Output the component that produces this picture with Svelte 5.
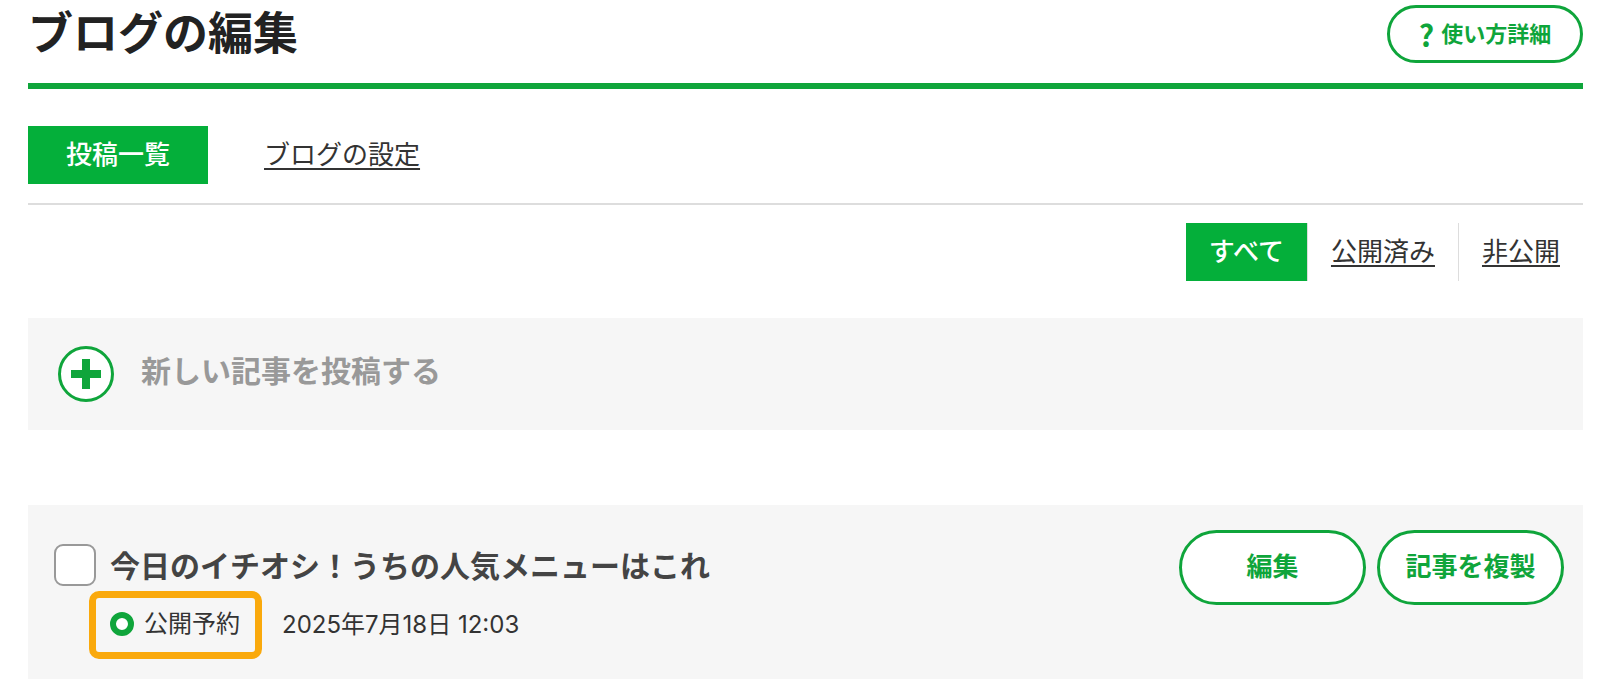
<script>
  let selected = $state(false);
  const posts = [
    { id: 'post-1', title: '今日のイチオシ！うちの人気メニューはこれ', status: '公開予約', date: '2025年7月18日 12:03' }
  ];
</script>

<main>
  <header>
    <h1>ブログの編集</h1>
    <button class="pill help" type="button"><span class="mark">?</span>使い方詳細</button>
  </header>

  <nav class="tabs" aria-label="ブログ">
    <a class="tab current" href="#list">投稿一覧</a>
    <a class="tab" href="#settings">ブログの設定</a>
  </nav>

  <nav class="filters" aria-label="公開状態">
    <a class="filter current" href="#all">すべて</a>
    <a class="filter" href="#published">公開済み</a>
    <a class="filter" href="#private">非公開</a>
  </nav>

  <button class="new-post" type="button">
    <svg viewBox="0 0 56 56" aria-hidden="true">
      <circle cx="28" cy="28" r="26.5" fill="#fff" stroke="#0fa53b" stroke-width="3" />
      <path d="M13 28H43M28 13V43" stroke="#0fa53b" stroke-width="8" />
    </svg>
    <span>新しい記事を投稿する</span>
  </button>

  {#each posts as post (post.id)}
    <article>
      <input id={post.id} type="checkbox" bind:checked={selected} />
      <div class="body">
        <label for={post.id}>{post.title}</label>
        <div class="meta">
          <span class="status">
            <svg viewBox="0 0 24 24" aria-hidden="true">
              <circle cx="12" cy="12" r="9" fill="#fff" stroke="#0fa53b" stroke-width="6" />
            </svg>
            {post.status}
          </span>
          <time datetime="2025-07-18T12:03">{post.date}</time>
        </div>
      </div>
      <div class="actions">
        <button class="pill" type="button">編集</button>
        <button class="pill" type="button">記事を複製</button>
      </div>
    </article>
  {/each}
</main>

<style>
  :global(body) {
    margin: 0;
    background: #fff;
  }

  main {
    padding: 0 17px 14px 28px;
    color: #333;
    font-family: Inter, 'Noto Sans CJK JP', sans-serif;
    font-size: 26px;
    line-height: 38px;
  }

  main :is(button, input) {
    box-sizing: border-box;
    font-family: inherit;
    cursor: pointer;
  }

  header {
    display: flex;
    align-items: flex-start;
    justify-content: space-between;
    padding-bottom: 15px;
    border-bottom: 6px solid #0fa53b;
  }

  h1 {
    margin: 0;
    color: #222;
    font-size: 45px;
    font-weight: 700;
    line-height: 68px;
  }

  .pill {
    display: flex;
    align-items: center;
    justify-content: center;
    min-width: 187px;
    height: 75px;
    padding: 0 20px 2px;
    border: 3px solid #0fa53b;
    border-radius: 38px;
    background: #fff;
    color: #0fa53b;
    font-size: 26px;
    font-weight: 700;
    line-height: 38px;
  }

  .help {
    gap: 7px;
    min-width: 196px;
    height: 58px;
    margin-top: 5px;
    padding-bottom: 0;
    font-size: 22px;
  }

  .mark {
    font-family: 'Noto Sans CJK JP', sans-serif;
    font-size: 30px;
  }

  .tabs {
    display: flex;
    gap: 18px;
    padding: 37px 0 19px;
    border-bottom: 2px solid #ddd;
  }

  .tab,
  .filter {
    padding: 10px 38px;
    color: #333;
    text-decoration: underline;
    text-decoration-thickness: 2px;
    text-underline-offset: 4px;
  }

  .current {
    background: #04af3a;
    color: #fff;
    font-weight: 500;
    text-decoration: none;
  }

  .filters {
    display: flex;
    justify-content: flex-end;
    padding: 18px 0 37px;
  }

  .filter {
    padding: 10px 23px;
  }

  .filter:not(:last-child) {
    border-right: 1px solid #ddd;
  }

  .new-post {
    display: flex;
    align-items: center;
    gap: 27px;
    width: 100%;
    height: 112px;
    padding: 0 30px;
    border: 0;
    background: #f6f6f6;
    color: #999;
    font-size: 30px;
    font-weight: 700;
    line-height: 44px;
  }

  .new-post svg {
    width: 56px;
    height: 56px;
  }

  .new-post span {
    padding-bottom: 6px;
  }

  article {
    display: flex;
    align-items: flex-start;
    margin-top: 75px;
    padding: 25px 19px 20px 26px;
    background: #f6f6f6;
  }

  input {
    appearance: none;
    width: 42px;
    height: 42px;
    margin: 14px 0 0;
    border: 2px solid #999;
    border-radius: 9px;
    background: #fff;
  }

  input:checked {
    background: #0fa53b;
  }

  .body {
    flex: 1;
  }

  label {
    display: block;
    padding: 14px 14px 3px;
    color: #444;
    font-size: 30px;
    font-weight: 700;
    line-height: 44px;
  }

  .meta {
    display: flex;
    align-items: center;
    gap: 20px;
    margin-left: -7px;
    font-size: 24px;
  }

  .status {
    display: flex;
    align-items: center;
    gap: 10px;
    padding: 7px 15px 9px 14px;
    border: 7px solid #faa90c;
    border-radius: 10px;
  }

  .status svg {
    width: 24px;
    height: 24px;
  }

  .actions {
    display: flex;
    gap: 11px;
  }
</style>
